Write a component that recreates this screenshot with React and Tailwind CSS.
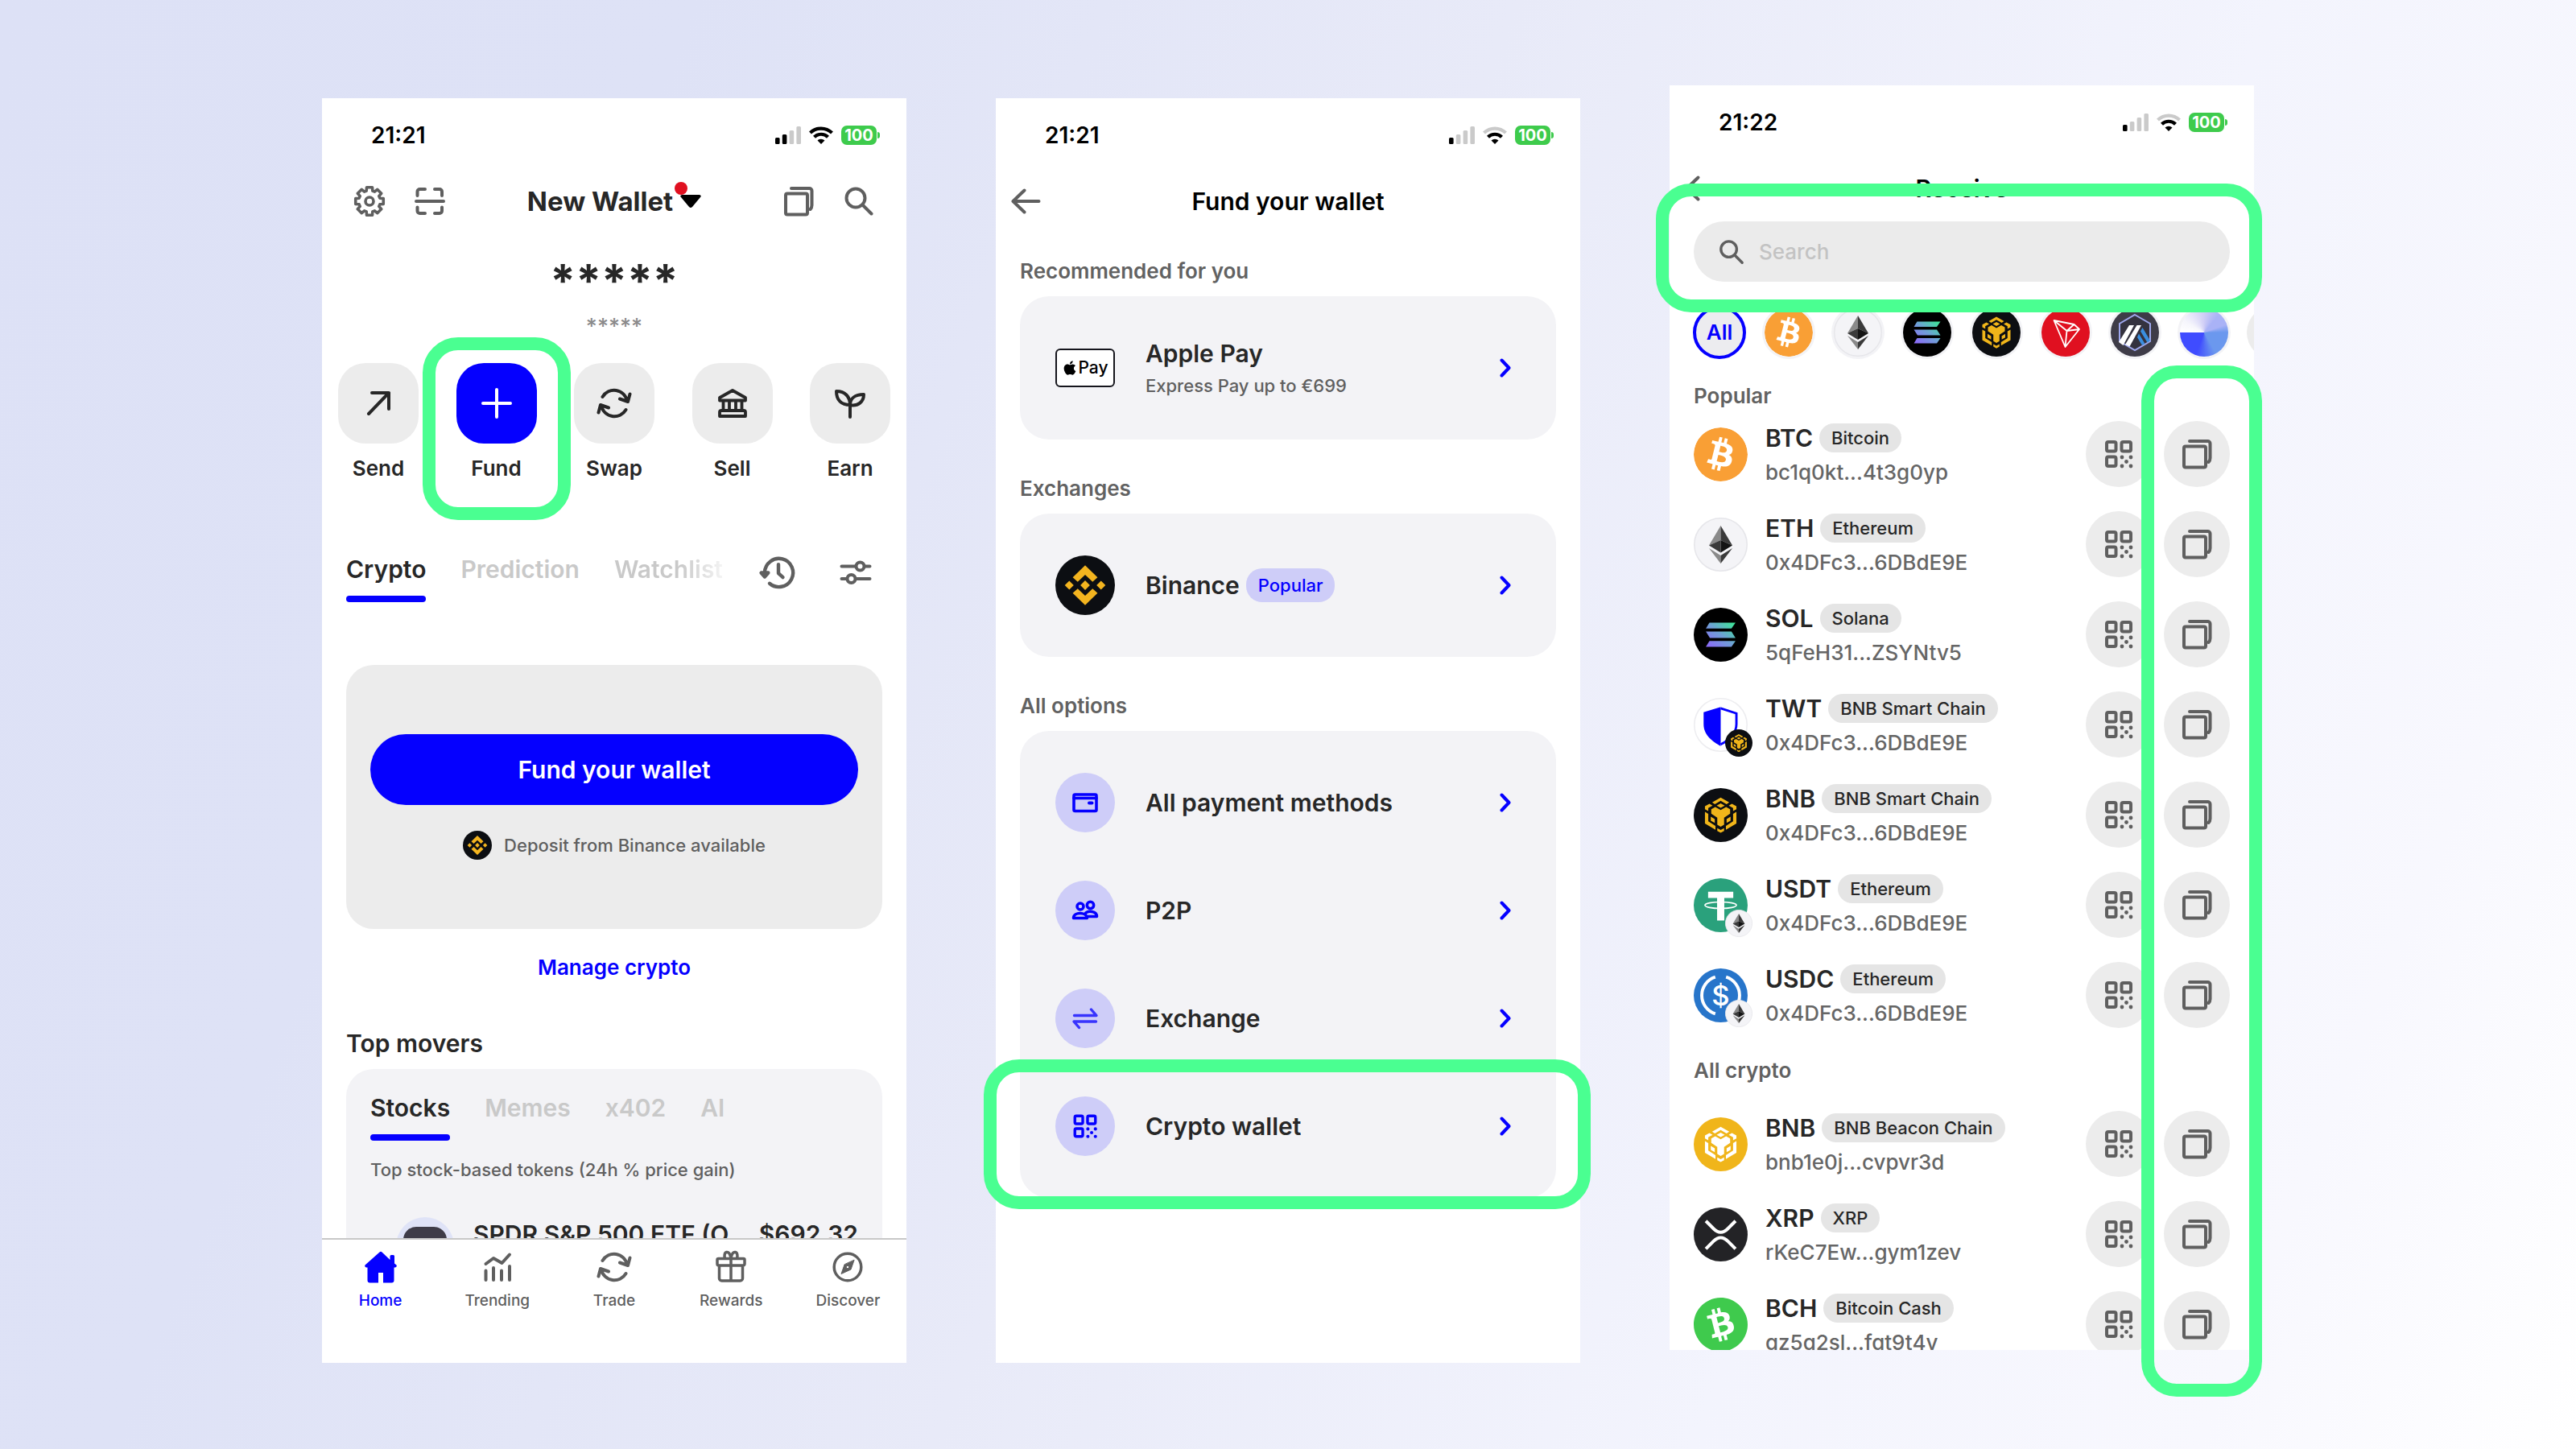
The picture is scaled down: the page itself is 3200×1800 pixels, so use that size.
import React from "react";
import { FaApple } from "react-icons/fa";
import { SiBitcoin } from "react-icons/si";

/* ---------- line icons, drawn on a 40 x 40 field centred on 0,0 ---------- */

function Line({ children, className = "size-10", width = 4 }) {
  return (
    <svg
      viewBox="-20 -20 40 40"
      className={`${className} shrink-0 overflow-visible`}
      fill="none"
      stroke="currentColor"
      strokeWidth={width}
      strokeLinecap="round"
      strokeLinejoin="round"
      aria-hidden="true"
    >
      {children}
    </svg>
  );
}

const gearPath = (() => {
  const points = [];
  for (let i = 0; i < 8; i++) {
    const mid = (i * Math.PI) / 4;
    [
      [-0.29, 13.4],
      [-0.2, 17.6],
      [0.2, 17.6],
      [0.29, 13.4],
    ].forEach(([d, r]) => {
      points.push(`${(Math.sin(mid + d) * r).toFixed(2)},${(-Math.cos(mid + d) * r).toFixed(2)}`);
    });
  }
  return `M${points.join("L")}Z`;
})();

const GearIcon = () => (
  <Line width={3.6}>
    <path d={gearPath} />
    <circle r="5" />
  </Line>
);
const ScanIcon = () => (
  <Line>
    <path d="M-15.500 -7V-12a3 3 0 0 1 3-3H-6M6 -15H12a3 3 0 0 1 3 3V-7M15 7.500V12a3 3 0 0 1-3 3H6M-6 15H-12.500a3 3 0 0 1-3-3V7.500M-17 0H17" />
  </Line>
);
const CopyIcon = () => (
  <Line>
    <rect x="-16" y="-9.500" width="27" height="26" rx="2" />
    <path d="M-9 -16H13.500a3 3 0 0 1 3 3V5q0 3-2 5" />
  </Line>
);
const SearchIcon = ({ className }) => (
  <Line className={className}>
    <circle cx="-4" cy="-4" r="11.500" />
    <path d="M5 5L15.500 15.500" />
  </Line>
);
const SendIcon = () => (
  <Line>
    <path d="M-12 13L13 -13M-8 -13H13V7" />
  </Line>
);
const PlusIcon = () => (
  <Line>
    <path d="M-17 0H17M0 -17V17" />
  </Line>
);
const SwapIcon = () => (
  <Line>
    <path d="M-14.500 -8A16.500 16.500 0 0 1 16 -3M7 -5.500L17 -2L19.500 -11.500M14.500 8A16.500 16.500 0 0 1 -16 3M-7 5.500L-17 2L-19.500 11.500" />
  </Line>
);
const BankIcon = () => (
  <Line width={3.8}>
    <path d="M0 -16L16 -7V-3.500H-16V-7ZM-11.500 -3V8M-4 -3V8M4 -3V8M11.500 -3V8M-14 9H14a2 2 0 0 1 2 2V16H-16V11a2 2 0 0 1 2-2Z" />
  </Line>
);
const SproutIcon = () => (
  <Line>
    <path d="M0 17V2C0 -8 -6 -15 -17 -15C-17 -4 -11 2 0 2M0 2C0 -6 6 -11 17 -11C17 -2 10 4 0 2" />
  </Line>
);
const HistoryIcon = () => (
  <Line className="size-[44px]">
    <path d="M-15.500 0A16 16 0 1 1 -10 12.500M0 -9V1L5 5.500" />
    <path d="M-19.500 0.500H-11.500L-15.500 5Z" fill="currentColor" />
  </Line>
);
const SlidersIcon = () => (
  <Line>
    <path d="M-17.500 -7.500H0M11 -7.500H17.500M-17.500 8H-11M0 8H17.500" />
    <circle cx="5.500" cy="-7.500" r="5" />
    <circle cx="-5.500" cy="8" r="5" />
  </Line>
);
const HomeIcon = () => (
  <svg viewBox="-20 -20 40 40" className="size-10" fill="currentColor" aria-hidden="true">
    <path d="M-1.500 -18.500Q0 -20 1.500 -18.500L11.500 -9V-13.500a1.500 1.500 0 0 1 1.500-1.500h2.500a1.500 1.500 0 0 1 1.500 1.500V-4.500L19.500 -2.500Q20.500 0 18 0.500H16.500V16.500a3 3 0 0 1-3 3H3V7H-3V19.500H-13.500a3 3 0 0 1-3-3V0.500H-18Q-20.500 0 -19.500 -2.500Z" />
  </svg>
);
const TrendingIcon = () => (
  <Line>
    <path d="M-14.500 -4L-5 -11L5.500 -5L15 -15.500M-14.500 4.500V16M-5 1V16M5 4.500V16M15 -1V16" />
  </Line>
);
const GiftIcon = () => (
  <Line width={3.5}>
    <path d="M-15.500 -10.500H15.500a1.500 1.500 0 0 1 1.500 1.500V-4a2 2 0 0 1-2 2H-15a2 2 0 0 1-2-2V-9a1.500 1.500 0 0 1 1.500-1.500ZM-14.500 -2V14a3 3 0 0 0 3 3H11.500a3 3 0 0 0 3-3V-2M0 -10V16M0 -11C-1 -17 -3 -19 -5.500 -18.500S-8.500 -14 -7.500 -11M0 -11C1 -17 3 -19 5.500 -18.500S8.500 -14 7.500 -11" />
  </Line>
);
const CompassIcon = () => (
  <Line width={3.5}>
    <circle r="16.800" />
    <path
      d="M8 -8.500L4 3L-8 8.500L-4 -3Z M0 -1.800A1.800 1.800 0 1 0 0 1.800A1.800 1.800 0 1 0 0 -1.800Z"
      fill="currentColor"
      fillRule="evenodd"
      strokeWidth="1"
    />
  </Line>
);
const BackIcon = () => (
  <Line>
    <path d="M16.500 0H-15.500M-1.500 -13.500L-15.500 0L-1.500 13.500" />
  </Line>
);
const ChevronIcon = () => (
  <svg viewBox="0 0 14 24" className="h-6 w-[14px] shrink-0" fill="none" stroke="#0500ff" strokeWidth="4" strokeLinecap="round" strokeLinejoin="round" aria-hidden="true">
    <path d="M2.500 2.500L11.500 12L2.500 21.500" />
  </svg>
);
const QrIcon = ({ className }) => (
  <Line className={className}>
    <rect x="-15" y="-15" width="11.500" height="11.500" rx="2" />
    <rect x="3.500" y="-15" width="11.500" height="11.500" rx="2" />
    <rect x="-15" y="3.500" width="11.500" height="11.500" rx="2" />
    <g fill="currentColor" stroke="none">
      <circle cx="4" cy="4" r="2.400" />
      <circle cx="15" cy="4" r="2.400" />
      <circle cx="9.500" cy="9.500" r="2.400" />
      <circle cx="4" cy="15" r="2.400" />
      <circle cx="15" cy="15" r="2.400" />
    </g>
  </Line>
);
const WalletIcon = () => (
  <Line width={3.6}>
    <rect x="-14" y="-10" width="28" height="20.500" rx="1.500" />
    <path d="M-14 -5.500H14" />
    <path d="M5 0.500H8.500" strokeWidth="4" />
  </Line>
);
const PeopleIcon = () => (
  <Line width={3.5}>
    <circle cx="-6" cy="-5" r="4" />
    <circle cx="6.500" cy="-6.500" r="4.200" />
    <path d="M-14.500 9.500C-14.500 1.500 1.500 1.500 2.500 9.500ZM0 4C3 -0.500 14.500 0.500 14.500 7.500H3" />
  </Line>
);
const ExchangeIcon = () => (
  <Line width={3.4}>
    <path d="M-13.500 -3.500H14L7.500 -11M13.500 4H-14L-7.500 11.500" strokeOpacity="0.75" />
  </Line>
);

/* ------------------------------ coin logos ------------------------------ */

function Disc({ fill, ring, children }) {
  return (
    <svg viewBox="-30 -30 60 60" className="size-full" aria-hidden="true">
      <circle r={ring ? 29.3 : 30} fill={fill} stroke={ring} strokeWidth={ring ? 1.4 : 0} />
      {children}
    </svg>
  );
}

const Btc = () => <SiBitcoin className="size-full rounded-full bg-white text-[#f99f35]" aria-hidden="true" />;
const Bch = () => (
  <div className="size-full -rotate-[28deg] rounded-full bg-white text-[#3fca4d]">
    <SiBitcoin className="size-full" aria-hidden="true" />
  </div>
);
const Eth = () => (
  <Disc fill="#f4f4f7" ring="#e6e6ea">
    <path d="M0 -21L-13 1L0 -5Z" fill="#8a8a8a" />
    <path d="M0 -21L13 1L0 -5Z" fill="#3a3a3a" />
    <path d="M-13 1L0 -5V9Z" fill="#3a3a3a" />
    <path d="M13 1L0 -5V9Z" fill="#141414" />
    <path d="M-13 4L0 21V12Z" fill="#8a8a8a" />
    <path d="M13 4L0 21V12Z" fill="#3a3a3a" />
  </Disc>
);
const Sol = () => (
  <Disc fill="#000">
    <defs>
      <linearGradient id="sol" x1="-12" y1="14" x2="12" y2="-14" gradientUnits="userSpaceOnUse">
        <stop offset="0" stopColor="#8b6cf8" />
        <stop offset="0.5" stopColor="#6f9fd6" />
        <stop offset="1" stopColor="#3fe29a" />
      </linearGradient>
    </defs>
    <path
      d="M-12.500 -13.500H16.500L12 -7H-16.500ZM-16.500 -3.500H12L16.500 3.500H-12ZM-12.500 7H16.500L12 13.500H-16.500Z"
      fill="url(#sol)"
    />
  </Disc>
);
const Bnb = ({ bg = "#0c0e12", fg = "#f0b51a" }) => (
  <Disc fill={bg}>
    <g fill={fg}>
      <path d="M0 -19.500L9.500 -14L6.500 -12L0 -15.800L-6.500 -12L-9.500 -14Z" />
      <path d="M0 -13L4.500 -10.500L0 -8L-4.500 -10.500Z" />
      <path d="M-17.500 -9.800L-12.500 -12.600L-9 -10.500L-13.800 -7.800V-4.500L-17.500 -6.600Z" />
      <path d="M17.500 -9.800L12.500 -12.600L9 -10.500L13.800 -7.800V-4.500L17.500 -6.600Z" />
      <path d="M0 -5.500L6 -9L10.500 -6.500V-1.500L3.800 2.800V10.800L0 13L-3.800 10.800V2.800L-10.500 -1.500V-6.500L-6 -9Z" />
      <path d="M-17.500 -3.500L-13.800 -1.400V7L-5.800 12V16.300L-17.500 9.500Z" />
      <path d="M17.500 -3.500L13.800 -1.400V7L5.800 12V16.300L17.500 9.500Z" />
      <path d="M-11 1.800L-6.600 4.400V8.800L-11 6.200Z" />
      <path d="M11 1.800L6.600 4.400V8.800L11 6.200Z" />
      <path d="M-3.800 14.500L0 16.600L3.800 14.500V17.600L0 19.800L-3.800 17.600Z" />
    </g>
  </Disc>
);
const BnbGold = () => <Bnb bg="#f0b51a" fg="#fff" />;
const Tron = () => (
  <Disc fill="#e01020">
    <path d="M-14.500 -15L10.500 -10L17 -4L-0.500 18ZM-14.500 -15L1.500 -2L-0.500 18M1.500 -2L17 -4M1.500 -2L10.500 -10" fill="none" stroke="#fff" strokeWidth="1.800" strokeLinejoin="round" />
  </Disc>
);
const Arbitrum = () => (
  <Disc fill="#3e3c48">
    <path d="M0 -22L19 -11V11L0 22L-19 11V-11Z" fill="#34323e" stroke="#9fa8ee" strokeWidth="2" />
    <path d="M-7 -9H-1L-14.500 16L-20 12ZM2.500 -9H8L-6.500 17.500L-12 15Z" fill="#fff" />
    <path d="M9.500 -6L19 10L15.500 12.500L7 -1.500ZM5 1.500L12.500 14L9 16L3 6Z" fill="#3a8fe0" />
  </Disc>
);
const Base = () => (
  <div className="size-full rounded-full bg-[conic-gradient(#cfcdf6_0deg,#a9b2f6_40deg,#a9b2f6_70deg,#6b98ee_90deg,#6b98ee_150deg,#3f4cff_200deg,#3f4cff_270deg,#ffffff_270deg,#f6f6fc_300deg,#cfcdf6_360deg)]" />
);
const Twt = () => (
  <Disc fill="#fff" ring="#ededf0">
    <path d="M0 -20L-19 -14V-1C-19 12 -8 19 0 23.500Z" fill="#0500ff" />
    <path d="M0 -18.500L17.500 -12.800V-1C17.500 11 8 17.500 0 21.800" fill="none" stroke="#0500ff" strokeWidth="2.600" />
  </Disc>
);
const Binance = () => (
  <Disc fill="#0c0e12">
    <path
      d="M0 -20L12.500 -8L7.500 -3.500L0 -10.500L-7.500 -3.500L-12.500 -8ZM0 20L12.500 8L7.500 3.500L0 10.500L-7.500 3.500L-12.500 8ZM0 -4.800L4.800 0L0 4.800L-4.800 0ZM-16 -4.500L-11.500 0L-16 4.500L-20.500 0ZM16 -4.500L20.500 0L16 4.500L11.500 0Z"
      fill="#f3b41f"
    />
  </Disc>
);
const Usdt = () => (
  <Disc fill="#2aa17c">
    <path d="M-14 -15H14V-8H4V17H-4V-8H-14Z" fill="#fff" />
    <ellipse rx="17.500" ry="3.600" fill="none" stroke="#fff" strokeWidth="1.500" />
  </Disc>
);
const Usdc = () => (
  <Disc fill="#2775ca">
    <path d="M-6 -20.500A21.500 21.500 0 0 0 -6 20.500M6 -20.500A21.500 21.500 0 0 1 6 20.500" fill="none" stroke="#fff" strokeWidth="3.500" />
    <text y="11" textAnchor="middle" fontSize="31" fontWeight="500" fill="#fff" fontFamily="Inter, sans-serif">$</text>
  </Disc>
);
const Xrp = () => (
  <Disc fill="#232326">
    <path d="M-16.500 -15L-8 -6.500Q0 1.500 8 -6.500L16.500 -15M-16.500 16L-8 7.500Q0 -0.500 8 7.500L16.500 16" fill="none" stroke="#fff" strokeWidth="3.600" />
  </Disc>
);

/* ----------------------------- shared pieces ----------------------------- */

function Ring({ className }) {
  return <div aria-hidden="true" className={`pointer-events-none absolute rounded-[44px] border-[16px] border-[#4aff91] ${className}`} />;
}

function StatusBar({ time, bars, fullWifi }) {
  return (
    <div className="flex h-[92px] shrink-0 items-center justify-between pl-[61px] pr-[33px] text-black">
      <span className="text-[28px] font-semibold leading-8">{time}</span>
      <div className="flex items-center gap-[10px]">
        <svg viewBox="0 0 32 22" className="h-[22px] w-8" aria-hidden="true">
          {[8, 12, 17, 22].map((h, i) => (
            <rect key={h} x={i * 8.8} y={22 - h} width="5.600" height={h} rx="1.500" fill={i < bars ? "#000" : "#cacaca"} />
          ))}
        </svg>
        <svg viewBox="0 0 30 22" className="h-[22px] w-[30px]" fill="none" strokeWidth="4.200" aria-hidden="true">
          <path d="M1.500 8A19.500 19.500 0 0 1 28.500 8" stroke={fullWifi ? "#000" : "#cacaca"} />
          <path d="M6.500 13.300A12 12 0 0 1 23.500 13.300" stroke="#000" />
          <path d="M15 22L10.500 17.500A6.500 6.500 0 0 1 19.500 17.500Z" fill="#000" />
        </svg>
        <div className="flex items-center gap-px">
          <span className="flex h-6 w-11 items-center justify-center rounded-[7px] bg-[#3ecb4c] text-[20px] font-bold leading-6 text-white">100</span>
          <span className="h-2 w-[3px] rounded-r-full bg-[#3ecb4c]" />
        </div>
      </div>
    </div>
  );
}

function Phone({ label, className = "", overlay, children }) {
  return (
    <section aria-label={label} className={`relative aspect-[390/844] min-w-0 ${className}`}>
      <div className="flex h-full flex-col overflow-hidden bg-white">{children}</div>
      {overlay}
    </section>
  );
}

/* ------------------------------ home screen ------------------------------ */

const actions = [
  { name: "Send", Icon: SendIcon },
  { name: "Fund", Icon: PlusIcon, primary: true },
  { name: "Swap", Icon: SwapIcon },
  { name: "Sell", Icon: BankIcon },
  { name: "Earn", Icon: SproutIcon },
];

const navItems = [
  { name: "Home", Icon: HomeIcon, active: true },
  { name: "Trending", Icon: TrendingIcon },
  { name: "Trade", Icon: SwapIcon },
  { name: "Rewards", Icon: GiftIcon },
  { name: "Discover", Icon: CompassIcon },
];

function Tab({ active, children, className = "" }) {
  return (
    <button type="button" className={`flex flex-col gap-[15px] whitespace-nowrap text-[30px] font-semibold leading-9 ${active ? "text-[#272727]" : "text-[#c9c9c9]"} ${className}`}>
      {children}
      <span className={`h-2 w-full rounded-full ${active ? "bg-[#0500ff]" : ""}`} />
    </button>
  );
}

function HomeScreen() {
  return (
    <Phone label="Home" className="mt-4">
      <StatusBar time="21:21" bars={2} fullWifi />
      <main className="min-h-0 flex-1 overflow-hidden">
        <header className="flex h-[72px] items-center justify-between px-[39px] text-[#5f5f5f]">
          <div className="flex gap-[35px]">
            <button type="button" aria-label="Settings"><GearIcon /></button>
            <button type="button" aria-label="Scan"><ScanIcon /></button>
          </div>
          <button type="button" className="flex items-center gap-[9px] text-[33px] font-bold leading-10 text-[#272727]">
            New Wallet
            <span className="relative">
              <svg viewBox="0 0 26 16" className="h-4 w-[26px]" aria-hidden="true">
                <path d="M2 0H24Q27 1 25 3L15 15Q13 17 11 15L1 3Q-1 1 2 0Z" fill="#000" />
              </svg>
              <span className="absolute -left-[7px] -top-4 size-4 rounded-full bg-[#e01020]" />
            </span>
          </button>
          <div className="flex gap-[35px]">
            <button type="button" aria-label="Copy address"><CopyIcon /></button>
            <button type="button" aria-label="Search"><SearchIcon /></button>
          </div>
        </header>

        <p className="mt-[26px] text-center text-[57px] font-bold leading-[74px] text-[#272727]">*****</p>
        <p className="mt-[10px] text-center text-[27px] font-medium leading-5 text-[#8a8a8a]">*****</p>

        <div className="mt-[35px] flex justify-between px-5">
          {actions.map(({ name, Icon, primary }) => (
            <div key={name} className="relative">
              <button type="button" className="flex flex-col items-center gap-[15px] text-[26px] font-semibold leading-8 text-[#272727]">
                <span className={`flex size-[100px] items-center justify-center rounded-[34px] ${primary ? "bg-[#0500ff] text-white" : "bg-[#ececec]"}`}>
                  <Icon />
                </span>
                {name}
              </button>
              {primary && <Ring className="-inset-x-[42px] -bottom-12 -top-8" />}
            </div>
          ))}
        </div>

        <div className="mt-[91px] flex items-start justify-between px-[30px]">
          <div className="flex gap-[43px]">
            <Tab active>Crypto</Tab>
            <Tab>Prediction</Tab>
            <Tab className="bg-linear-to-r from-[#c9c9c9] from-60% to-[#f4f4f4] bg-clip-text text-transparent">Watchlist</Tab>
          </div>
          <div className="flex items-center gap-[54px] pr-[13px] text-[#5f5f5f]">
            <button type="button" aria-label="History"><HistoryIcon /></button>
            <button type="button" aria-label="Filters"><SlidersIcon /></button>
          </div>
        </div>

        <div className="mx-[30px] mt-[78px] flex flex-col items-center rounded-[34px] bg-[#ececec] px-[30px] py-[86px]">
          <button type="button" className="h-[88px] w-full rounded-full bg-[#0500ff] text-[30px] font-semibold text-white">Fund your wallet</button>
          <div className="mt-8 flex items-center gap-[15px] text-[22px] font-medium leading-9 text-[#5f5f5f]">
            <span className="size-9"><Binance /></span>
            Deposit from Binance available
          </div>
        </div>

        <div className="mt-8 text-center">
          <a href="#manage" className="block text-[26px] font-semibold leading-8 text-[#0500ff]">Manage crypto</a>
        </div>

        <h2 className="mt-[60px] px-[30px] text-[30px] font-semibold leading-9 text-[#272727]">Top movers</h2>
        <div className="mx-[30px] mt-[14px] rounded-[34px] bg-[#f3f3f6] px-[30px] pb-10 pt-[30px]">
          <div className="flex gap-[43px]">
            <Tab active>Stocks</Tab>
            <Tab>Memes</Tab>
            <Tab>x402</Tab>
            <Tab>AI</Tab>
          </div>
          <p className="mt-[22px] text-[22px] font-medium leading-7 text-[#5f5f5f]">Top stock-based tokens (24h % price gain)</p>
          <div className="mt-[45px] flex text-[30px] font-semibold leading-9 text-[#272727]">
            <span className="ml-8 flex size-[72px] justify-center rounded-full bg-[#dfe3f7] pt-3">
              <span className="h-12 w-[54px] rounded-t-2xl bg-[#3e3c48]" />
            </span>
            <span className="ml-6 pt-[3px]">SPDR S&amp;P 500 ETF (O</span>
            <span className="ml-auto pt-[3px]">$692.32</span>
          </div>
        </div>
      </main>
      <nav className="grid h-[155px] shrink-0 grid-cols-5 border-t-2 border-[#c8c8c8] pt-[14px]">
        {navItems.map(({ name, Icon, active }) => (
          <a key={name} href={`#${name.toLowerCase()}`} className={`flex flex-col items-center gap-[10px] text-[19px] font-medium leading-6 ${active ? "text-[#0500ff]" : "text-[#5f5f5f]"}`}>
            <Icon />
            {name}
          </a>
        ))}
      </nav>
    </Phone>
  );
}

/* ------------------------------ fund screen ------------------------------ */

function Option({ icon, title, badge, note, highlighted }) {
  return (
    <li className="relative">
      <button type="button" className="flex h-[134px] w-full items-center gap-[38px] pl-11 pr-14 text-left">
        {icon}
        <span className="flex flex-1 flex-col">
          <span className="flex items-center gap-2 text-[30px] font-semibold leading-10 text-[#272727]">
            {title}
            {badge && <span className="rounded-[20px] bg-[#cecdf8] px-[15px] text-[22px] font-medium leading-[42px] text-[#0500ff]">{badge}</span>}
          </span>
          {note && <span className="pt-1 text-[22px] font-medium leading-8 text-[#5f5f5f]">{note}</span>}
        </span>
        <ChevronIcon />
      </button>
      {highlighted && <Ring className="-bottom-9 -left-[45px] -right-[43px] -top-4" />}
    </li>
  );
}

const Round = ({ children }) => (
  <span className="flex size-[74px] shrink-0 items-center justify-center rounded-full bg-[#cecdf8] text-[#0500ff]">{children}</span>
);

function Group({ title, children }) {
  return (
    <section className="px-[30px]">
      <h2 className="text-[26px] font-semibold leading-8 text-[#626262]">{title}</h2>
      <ul className="mt-[15px] rounded-[36px] bg-[#f3f3f6] py-[22px]">{children}</ul>
    </section>
  );
}

function FundScreen() {
  return (
    <section aria-label="Fund your wallet" className="mt-4 flex aspect-[390/844] min-w-0 flex-col bg-white">
      <StatusBar time="21:21" bars={1} />
      <header className="grid h-[72px] grid-cols-[40px_1fr_40px] items-center px-[17px]">
        <button type="button" aria-label="Back" className="text-[#5f5f5f]"><BackIcon /></button>
        <h1 className="text-center text-[30px] font-semibold leading-10 text-black">Fund your wallet</h1>
      </header>
      <div className="mt-[35px] flex flex-col gap-[45px]">
        <Group title="Recommended for you">
          <Option
            title="Apple Pay"
            note="Express Pay up to €699"
            icon={
              <span className="flex h-12 w-[74px] shrink-0 items-center justify-center rounded-[6px] border-2 border-[#15151c] bg-white text-[21px] font-medium leading-6 text-black">
                <FaApple className="size-5" aria-hidden="true" />
                Pay
              </span>
            }
          />
        </Group>
        <Group title="Exchanges">
          <Option title="Binance" badge="Popular" icon={<span className="size-[74px] shrink-0"><Binance /></span>} />
        </Group>
        <Group title="All options">
          <Option title="All payment methods" icon={<Round><WalletIcon /></Round>} />
          <Option title="P2P" icon={<Round><PeopleIcon /></Round>} />
          <Option title="Exchange" icon={<Round><ExchangeIcon /></Round>} />
          <Option title="Crypto wallet" highlighted icon={<Round><QrIcon className="size-[34px]" /></Round>} />
        </Group>
      </div>
    </section>
  );
}

/* ----------------------------- receive screen ----------------------------- */

const networks = [
  ["Bitcoin", Btc],
  ["Ethereum", Eth],
  ["Solana", Sol],
  ["BNB Smart Chain", Bnb],
  ["Tron", Tron],
  ["Arbitrum", Arbitrum],
  ["Base", Base],
];

const popular = [
  { symbol: "BTC", chain: "Bitcoin", address: "bc1q0kt...4t3g0yp", Logo: Btc },
  { symbol: "ETH", chain: "Ethereum", address: "0x4DFc3...6DBdE9E", Logo: Eth },
  { symbol: "SOL", chain: "Solana", address: "5qFeH31...ZSYNtv5", Logo: Sol },
  { symbol: "TWT", chain: "BNB Smart Chain", address: "0x4DFc3...6DBdE9E", Logo: Twt, Badge: Bnb },
  { symbol: "BNB", chain: "BNB Smart Chain", address: "0x4DFc3...6DBdE9E", Logo: Bnb },
  { symbol: "USDT", chain: "Ethereum", address: "0x4DFc3...6DBdE9E", Logo: Usdt, Badge: Eth },
  { symbol: "USDC", chain: "Ethereum", address: "0x4DFc3...6DBdE9E", Logo: Usdc, Badge: Eth },
];

const allCrypto = [
  { symbol: "BNB", chain: "BNB Beacon Chain", address: "bnb1e0j...cvpvr3d", Logo: BnbGold },
  { symbol: "XRP", chain: "XRP", address: "rKeC7Ew...gym1zev", Logo: Xrp },
  { symbol: "BCH", chain: "Bitcoin Cash", address: "qz5q2sl...fqt9t4y", Logo: Bch },
];

function CoinRow({ symbol, chain, address, Logo, Badge }) {
  return (
    <li className="flex h-28 items-center">
      <div className="relative size-[67px] shrink-0">
        <Logo />
        {Badge && (
          <span className="absolute -bottom-[6px] -right-[6px] size-[34px]"><Badge /></span>
        )}
      </div>
      <div className="ml-[22px] flex-1">
        <div className="flex items-center gap-2 text-[30px] font-semibold leading-10 text-[#272727]">
          {symbol}
          <span className="rounded-full bg-[#e5e5e5] px-[15px] text-[22px] font-medium leading-9">{chain}</span>
        </div>
        <div className="mt-[5px] text-[26px] font-medium leading-9 text-[#666666]">{address}</div>
      </div>
      <div className="flex gap-[15px] text-[#5f5f5f]">
        <button type="button" aria-label={`${symbol} QR code`} className="flex size-[82px] items-center justify-center rounded-full bg-[#ececec]"><QrIcon /></button>
        <button type="button" aria-label={`Copy ${symbol} address`} className="flex size-[82px] items-center justify-center rounded-full bg-[#ececec]"><CopyIcon /></button>
      </div>
    </li>
  );
}

function ReceiveScreen() {
  return (
    <Phone
      label="Receive"
      overlay={
        <>
          <Ring className="-left-[17px] -right-[10px] top-[122px] h-40" />
          <Ring className="-bottom-[58px] -right-[10px] top-[348px] w-[150px]" />
        </>
      }
    >
      <StatusBar time="21:22" bars={1} />
      <header className="grid h-[72px] shrink-0 grid-cols-[40px_1fr_40px] items-center px-[17px]">
        <button type="button" aria-label="Back" className="text-[#5f5f5f]"><BackIcon /></button>
        <h1 className="text-center text-[30px] font-semibold leading-10 text-black">Receive</h1>
      </header>
      <label className="mx-[30px] mt-[5px] flex h-[75px] shrink-0 items-center gap-[17px] rounded-full bg-[#ebebeb] px-[30px] text-[#5f5f5f]">
        <SearchIcon className="size-[34px]" />
        <input type="search" aria-label="Search" placeholder="Search" className="min-w-0 flex-1 bg-transparent text-[26px] font-medium leading-8 outline-none placeholder:text-[#c3c3c3]" />
      </label>
      <div className="mt-[30px] flex shrink-0 gap-5 overflow-hidden pl-[29px]">
        <button type="button" className="size-[66px] shrink-0 rounded-full border-4 border-[#0500ff] bg-[#ececef] text-[26px] font-semibold leading-8 text-[#0500ff]">All</button>
        {networks.map(([name, Logo]) => (
          <button key={name} type="button" aria-label={name} className="size-[66px] shrink-0 rounded-full bg-[#f3f3f6] p-[3px]"><Logo /></button>
        ))}
        <button type="button" aria-label="More networks" className="size-[66px] shrink-0 rounded-full bg-[#ececec]" />
      </div>
      <div className="mt-[30px] px-[30px]">
        <h2 className="text-[26px] font-semibold leading-8 text-[#626262]">Popular</h2>
        <ul>{popular.map((c) => <CoinRow key={c.symbol} {...c} />)}</ul>
        <h2 className="mb-[19px] mt-[22px] text-[26px] font-semibold leading-8 text-[#626262]">All crypto</h2>
        <ul>{allCrypto.map((c) => <CoinRow key={c.symbol} {...c} />)}</ul>
      </div>
    </Phone>
  );
}

export default function App() {
  return (
    <div className="min-h-screen bg-[linear-gradient(112deg,#dde1f6_0%,#dee2f6_22%,#e8eaf8_48%,#f3f4fd_72%,#f8f8fe_88%,#ffffff_100%)] px-[12.5%] pt-[106px] font-[Inter,sans-serif]">
      <div className="grid grid-cols-3 items-start gap-x-[111px]">
        <HomeScreen />
        <FundScreen />
        <ReceiveScreen />
      </div>
    </div>
  );
}
